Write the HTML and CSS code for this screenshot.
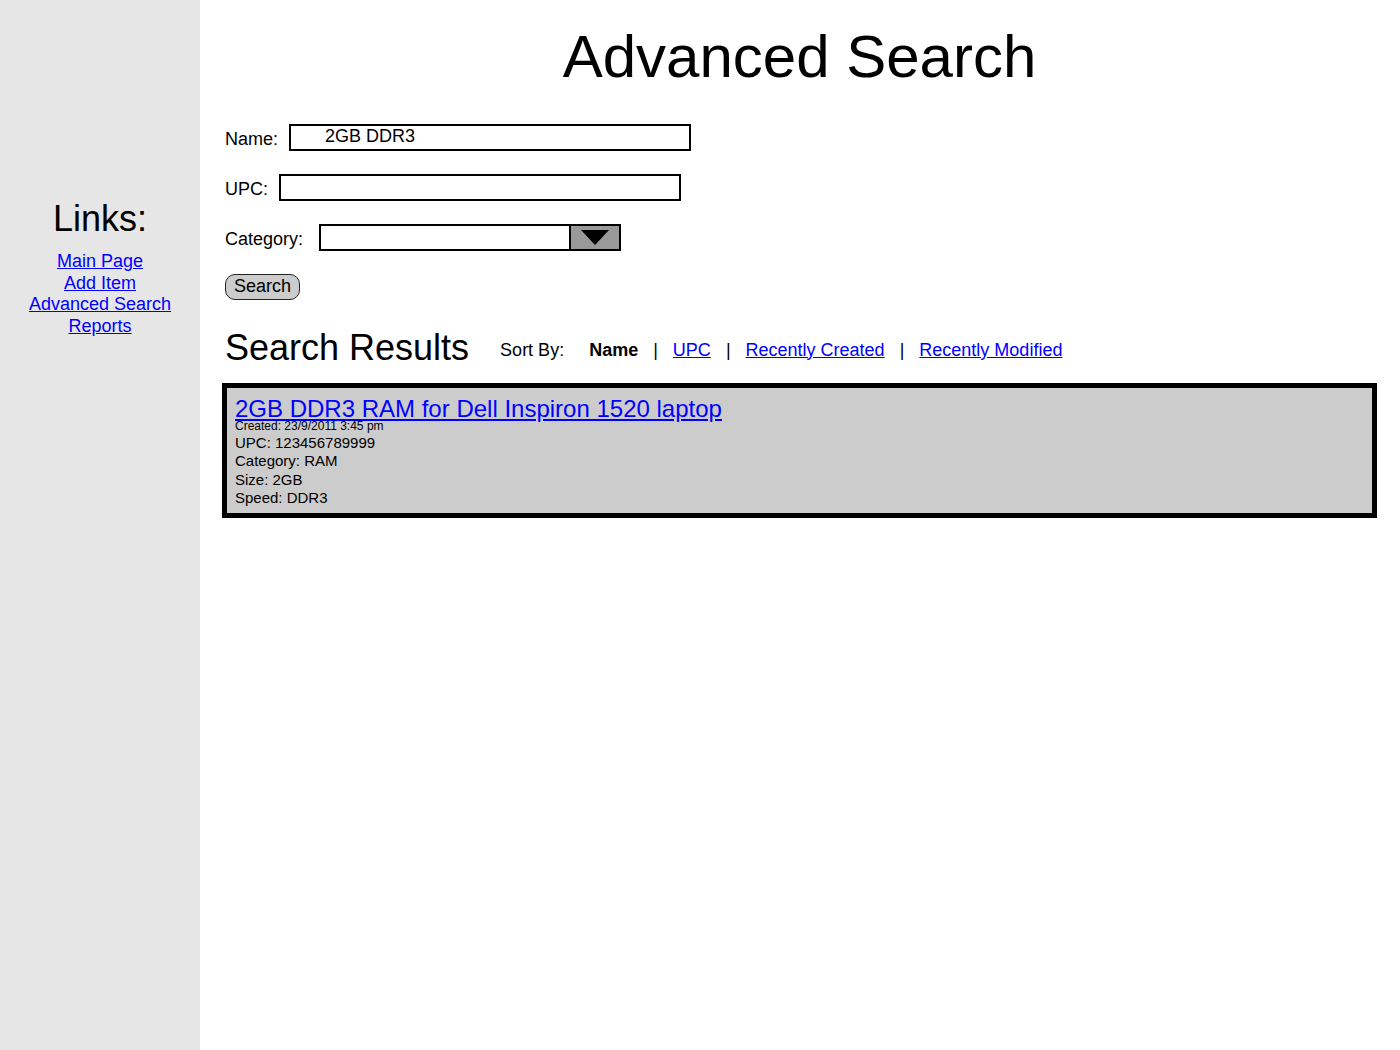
FILE: index.html
```html
<!DOCTYPE html>
<html lang="en">
<head>
<meta charset="utf-8">
<title>Advanced Search</title>
<link rel="stylesheet" href="styles.css">
</head>
<body>
<div class="page">
  <aside class="sidebar">
    <h2 class="links-title">Links:</h2>
    <nav class="links">
      <a href="#">Main Page</a>
      <a href="#">Add Item</a>
      <a href="#">Advanced Search</a>
      <a href="#">Reports</a>
    </nav>
  </aside>
  <main class="main">
    <h1 class="title">Advanced Search</h1>
    <form class="search-form">
      <div class="row">
        <label class="label label-name" for="name">Name:</label>
        <input class="field field-name" id="name" type="text" value="2GB DDR3">
      </div>
      <div class="row">
        <label class="label label-upc" for="upc">UPC:</label>
        <input class="field field-upc" id="upc" type="text" value="">
      </div>
      <div class="row">
        <label class="label label-cat" for="cat">Category:</label>
        <div class="select" id="cat">
          <div class="select-value"></div>
          <div class="select-button"><span class="triangle"></span></div>
        </div>
      </div>
      <div class="row">
        <button class="btn" type="button">Search</button>
      </div>
    </form>
    <div class="results-head">
      <h2 class="results-title">Search Results</h2>
      <div class="sort">
        <span class="sort-label">Sort By:</span>
        <span class="sort-current">Name</span>
        <span class="sep">|</span>
        <a href="#">UPC</a>
        <span class="sep">|</span>
        <a href="#">Recently Created</a>
        <span class="sep">|</span>
        <a href="#">Recently Modified</a>
      </div>
    </div>
    <div class="result">
      <a class="result-title" href="#">2GB DDR3 RAM for Dell Inspiron 1520 laptop</a>
      <div class="result-created">Created: 23/9/2011 3:45 pm</div>
      <div class="result-props">
        <div>UPC: 123456789999</div>
        <div>Category: RAM</div>
        <div>Size: 2GB</div>
        <div>Speed: DDR3</div>
      </div>
    </div>
  </main>
</div>
</body>
</html>
```

FILE: styles.css
```css
* {
  box-sizing: border-box;
}

html, body {
  margin: 0;
  padding: 0;
  background: #fff;
}

body {
  font-family: "Liberation Sans", Arial, sans-serif;
  color: #000;
}

a {
  color: #0000ff;
  text-decoration: underline;
}

.page {
  display: flex;
  min-height: 1050px;
}

.sidebar {
  width: 200px;
  flex: 0 0 200px;
  background: #e6e6e6;
  padding-top: 198px;
  text-align: center;
}

.links-title {
  margin: 0;
  font-size: 36px;
  font-weight: normal;
  line-height: 42px;
}

.links {
  margin-top: 11px;
  display: flex;
  flex-direction: column;
  align-items: center;
  font-size: 18px;
  line-height: 21.7px;
}

.main {
  flex: 1;
  padding: 0 23px 0 22px;
}

.title {
  margin: 22px 0 0;
  font-size: 60px;
  font-weight: normal;
  line-height: 69px;
  text-align: center;
}

.search-form {
  margin-top: 33px;
  padding-left: 3px;
  display: flex;
  flex-direction: column;
  gap: 23px;
}

.row {
  display: flex;
  align-items: flex-start;
  height: 27px;
}

.label {
  font-size: 18px;
  line-height: 21px;
  margin-top: 4.5px;
}

.label-name { margin-right: 11px; }
.label-upc { margin-right: 11px; }
.label-cat { margin-right: 16px; }

.field {
  width: 402px;
  height: 27px;
  border: 2px solid #000;
  border-radius: 0;
  background: #fff;
  font-family: "Liberation Sans", Arial, sans-serif;
  font-size: 18px;
  color: #000;
  padding: 0 4px 3px 34px;
  margin: 0;
  outline: none;
}

.select {
  width: 302px;
  height: 27px;
  border: 2px solid #000;
  display: flex;
  background: #fff;
}

.select-value {
  flex: 1;
}

.select-button {
  width: 50px;
  border-left: 2px solid #000;
  background: #999;
  display: flex;
  align-items: center;
  justify-content: center;
}

.triangle {
  width: 0;
  height: 0;
  border-left: 14px solid transparent;
  border-right: 14px solid transparent;
  border-top: 15px solid #000;
}

.btn {
  height: 26px;
  margin: 0;
  padding: 0 8px 2px;
  border: 1px solid #222;
  border-radius: 10px;
  background: #ccc;
  font-family: "Liberation Sans", Arial, sans-serif;
  font-size: 18px;
  line-height: 22px;
  color: #000;
}

.results-head {
  display: flex;
  align-items: flex-start;
  margin-top: 26px;
  padding-left: 3px;
}

.results-title {
  margin: 0;
  font-size: 36px;
  font-weight: normal;
  line-height: 41px;
}

.sort {
  display: flex;
  align-items: baseline;
  gap: 15px;
  margin: 12.5px 0 0 31px;
  font-size: 18px;
  line-height: 21px;
}

.sort-label {
  margin-right: 10px;
}

.sort-current {
  font-weight: bold;
}

.result {
  margin-top: 15px;
  border: 5px solid #000;
  background: #ccc;
  padding: 7.5px 8px 6px;
}

.result-title {
  display: block;
  width: max-content;
  font-size: 24px;
  line-height: 25px;
}

.result-created {
  margin-top: 0.5px;
  font-size: 12px;
  line-height: 11px;
}

.result-props {
  margin-top: 2px;
  font-size: 15px;
  line-height: 18.3px;
}
```
